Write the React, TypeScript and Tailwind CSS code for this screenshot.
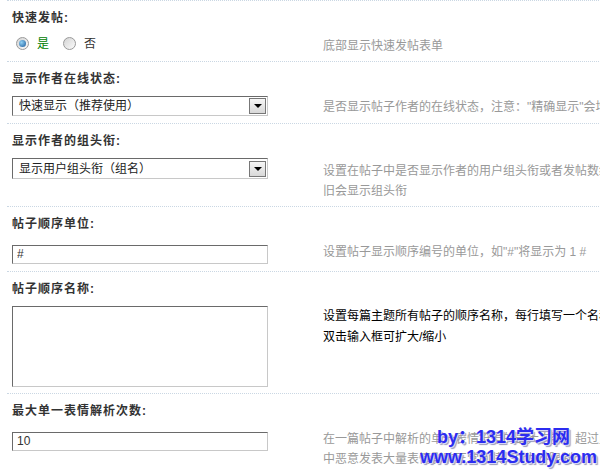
import React from "react";

function Title({ children }: { children: React.ReactNode }) {
    return (
        <div className="pl-[5px] pt-[9px] pb-[9px] text-[12px] leading-[16px] font-bold tracking-[1px] text-[#333]">
            {children}
        </div>
    );
}

function Tip({
    children,
    className,
    dark,
}: {
    children: React.ReactNode;
    className: string;
    dark?: boolean;
}) {
    return (
        <div
            className={
                (dark
                    ? "text-black leading-[21px] "
                    : "text-[#999] leading-[20px] ") +
                "text-[12px] whitespace-nowrap " +
                className
            }
        >
            {children}
        </div>
    );
}

function Radio({ checked }: { checked?: boolean }) {
    return (
        <span className="w-[13px] h-[13px] shrink-0 rounded-full border border-[#999] bg-linear-to-br from-[#d4d4d4] to-[#fbfbfb] flex items-center justify-center">
            {checked && (
                <span className="w-[7px] h-[7px] rounded-full bg-[radial-gradient(circle_at_35%_35%,#8fd0f4,#1a5a9a)]" />
            )}
        </span>
    );
}

function FakeSelect({ value, tall }: { value: string; tall?: boolean }) {
    return (
        <div
            className={
                "w-[256px] flex items-center justify-between border border-t-[#6a6a6a] border-l-[#6a6a6a] border-r-[#c8c8c8] border-b-[#c8c8c8] bg-white pl-[6px] pr-[1px] " +
                (tall ? "h-[21px]" : "h-[20px]")
            }
        >
            <span className="text-[12px] leading-none text-[#222]">
                {value}
            </span>
            <span className="w-[17px] h-[16px] border border-[#777] bg-linear-to-b from-[#f6f6f6] to-[#d8d8d8] flex items-center justify-center">
                <span className="w-0 h-0 border-l-[4px] border-r-[4px] border-t-[4px] border-l-transparent border-r-transparent border-t-black" />
            </span>
        </div>
    );
}

const inset =
    "border border-t-[#6a6a6a] border-l-[#6a6a6a] border-r-[#c8c8c8] border-b-[#c8c8c8] bg-white outline-none";

function Block({ children }: { children: React.ReactNode }) {
    return (
        <div className="border-t border-dotted border-[#cad7e3]">{children}</div>
    );
}

export default function App() {
    return (
        <div className="relative w-[600px] h-[471px] overflow-hidden bg-white pl-[7px] font-['Liberation_Sans','Noto_Sans_CJK_SC',sans-serif]">
            <div className="w-[900px]">
                <Block>
                    <Title>快速发帖:</Title>
                    <div className="flex">
                        <div className="w-[316px] shrink-0 pl-[5px] pb-[6px]">
                            <div className="h-[15px] mt-[1px] flex items-center text-[12px]">
                                <span className="ml-[4px]">
                                    <Radio checked />
                                </span>
                                <span className="ml-[8px] text-[#008000]">
                                    是
                                </span>
                                <span className="ml-[14px]">
                                    <Radio />
                                </span>
                                <span className="ml-[8px] text-[#333]">否</span>
                            </div>
                        </div>
                        <Tip className="pt-[1px] pb-[5px]">
                            底部显示快速发帖表单
                        </Tip>
                    </div>
                </Block>

                <Block>
                    <Title>显示作者在线状态:</Title>
                    <div className="flex">
                        <div className="w-[316px] shrink-0 pl-[5px] pb-[6px]">
                            <FakeSelect value="快速显示（推荐使用）" />
                        </div>
                        <Tip className="pt-[1px] pb-[6px]">
                            是否显示帖子作者的在线状态，注意："精确显示"会增加服务器负担
                        </Tip>
                    </div>
                </Block>

                <Block>
                    <Title>显示作者的组头衔:</Title>
                    <div className="flex">
                        <div className="w-[316px] shrink-0 pl-[5px] pb-[6px]">
                            <FakeSelect value="显示用户组头衔（组名）" tall />
                        </div>
                        <Tip className="pt-[3px] pb-[5px]">
                            设置在帖子中是否显示作者的用户组头衔或者发帖数级别头衔，如果用户组头衔为空，依
                            <br />
                            旧会显示组头衔
                        </Tip>
                    </div>
                </Block>

                <Block>
                    <Title>帖子顺序单位:</Title>
                    <div className="flex">
                        <div className="w-[316px] shrink-0 pl-[5px] pb-[6px]">
                            <input
                                readOnly
                                value="#"
                                className={
                                    "w-[256px] h-[19px] pl-[4px] text-[12px] text-[#333] " +
                                    inset
                                }
                            />
                        </div>
                        <Tip className="pt-[1px] pb-[4px]">
                            设置帖子显示顺序编号的单位，如"#"将显示为 1 #
                        </Tip>
                    </div>
                </Block>

                <Block>
                    <Title>帖子顺序名称:</Title>
                    <div className="flex">
                        <div className="w-[316px] shrink-0 pl-[5px] pb-[6px]">
                            <textarea
                                readOnly
                                value=""
                                className={
                                    "block w-[256px] h-[81px] resize-none " +
                                    inset
                                }
                            />
                        </div>
                        <Tip dark className="pt-0 pb-[6px]">
                            设置每篇主题所有帖子的顺序名称，每行填写一个名称，第一行为楼主，第二行为沙发
                            <br />
                            双击输入框可扩大/缩小
                        </Tip>
                    </div>
                </Block>

                <Block>
                    <Title>最大单一表情解析次数:</Title>
                    <div className="flex">
                        <div className="w-[316px] shrink-0 pl-[5px] pb-[6px]">
                            <input
                                readOnly
                                value="10"
                                className={
                                    "w-[256px] h-[19px] pl-[4px] text-[12px] text-[#333] " +
                                    inset
                                }
                            />
                        </div>
                        <Tip className="pt-[1px] pb-[6px]">
                            在一篇帖子中解析的单一表情符号的最大次数，超过此次数限制的表情将不被解析，用于防止用户在帖子
                            <br />
                            中恶意发表大量表情影响正常阅读，0 为不限制
                        </Tip>
                    </div>
                </Block>
                <div className="border-t border-dotted border-[#cad7e3]" />
            </div>

            <div className="absolute left-[420px] top-[427px] text-[18px] leading-[20px] font-bold text-[#2c2cf0] [text-shadow:1px_1px_0_#d8d8f8,2px_2px_1px_#9c9cba] whitespace-nowrap">
                <div className="ml-[17px]">by：1314学习网</div>
                <div>www.1314Study.com</div>
            </div>
        </div>
    );
}
